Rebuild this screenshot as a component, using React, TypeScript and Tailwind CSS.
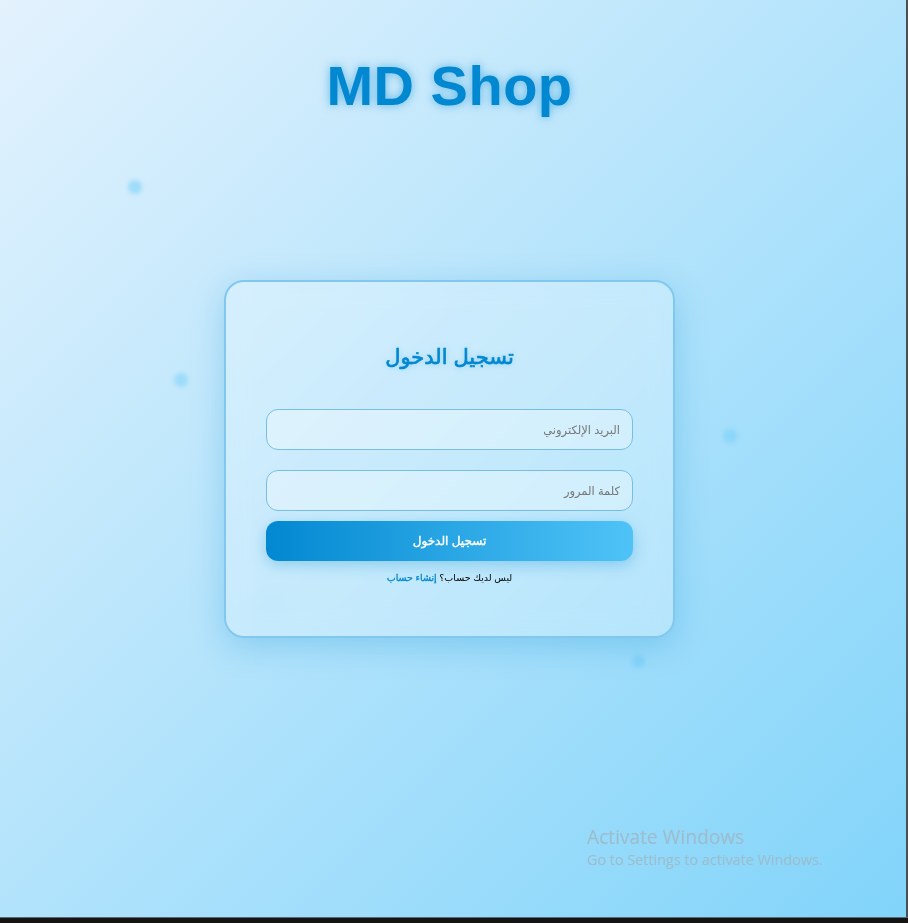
import React from "react";

const font = "[font-family:'Liberation_Sans','DejaVu_Sans',Arial,sans-serif]";

export default function App() {
  return (
    <div className="w-[908px] h-[923px] flex flex-col bg-[#111] overflow-hidden">
      <div className="flex h-[917px]">
        <div
          className={`relative flex-1 h-full flex flex-col items-center pr-[7px] bg-[linear-gradient(135deg,#e3f2fd,#81d4fa)] ${font}`}
        >
          {/* particles */}
          <div className="absolute left-[128px] top-[180px] w-[14px] h-[14px] rounded-full bg-[#4fc3f7]/40 blur-[2px]" />
          <div className="absolute left-[174px] top-[373px] w-[14px] h-[14px] rounded-full bg-[#4fc3f7]/35 blur-[2px]" />
          <div className="absolute left-[723px] top-[429px] w-[14px] h-[14px] rounded-full bg-[#4fc3f7]/30 blur-[2px]" />
          <div className="absolute left-[632px] top-[655px] w-[13px] h-[13px] rounded-full bg-[#4fc3f7]/30 blur-[2px]" />
          <div className="absolute left-[262px] top-[594px] w-[20px] h-[20px] rounded-full bg-[#81d4fa]/30 blur-[4px]" />

          <h1 className="mt-[54px] h-[64px] leading-[64px] text-[56px] font-bold text-[#0288d1] tracking-[0.5px] [text-shadow:0_0_10px_rgba(2,136,209,0.55)]">
            MD Shop
          </h1>

          <div
            dir="rtl"
            className="mt-[162px] w-[451px] rounded-[20px] border-2 border-[#81c7ee] bg-white/25 backdrop-blur-md shadow-[0_8px_32px_rgba(2,136,209,0.25)] px-[40px] pt-[41px] pb-[51px] flex flex-col"
          >
            <h2 className="mt-[20px] h-[28px] leading-[28px] text-center text-[21px] font-normal text-[#0288d1] [-webkit-text-stroke:0.7px_#0288d1] [text-shadow:0_0_6px_rgba(2,136,209,0.35)]">
              تسجيل الدخول
            </h2>
            <input
              type="email"
              placeholder="البريد الإلكتروني"
              className="mt-[38px] h-[41px] w-full rounded-[12px] border border-[#78bde3] bg-white/30 px-[12px] text-[11.5px] text-[#333] placeholder:text-[#777] outline-none"
            />
            <input
              type="password"
              placeholder="كلمة المرور"
              className="mt-[20px] h-[41px] w-full rounded-[12px] border border-[#78bde3] bg-white/30 px-[12px] text-[11.5px] text-[#333] placeholder:text-[#777] outline-none"
            />
            <button className="mt-[10px] h-[40px] w-full rounded-[12px] bg-[linear-gradient(to_left,#4fc3f7,#0288d1)] text-white text-[12px] font-normal [-webkit-text-stroke:0.4px_#fff] shadow-[0_4px_15px_rgba(2,136,209,0.3)]">
              تسجيل الدخول
            </button>
            <p className="mt-[10px] h-[14px] leading-[14px] text-center text-[9.5px] text-black">
              ليس لديك حساب؟{" "}
              <a className="text-[#0288d1] [-webkit-text-stroke:0.3px_#0288d1]">إنشاء حساب</a>
            </p>
          </div>

          {/* watermark */}
          <div className="absolute left-[587px] top-[824px] [font-family:'Open_Sans','Noto_Sans',sans-serif] text-[#9dbccc]">
            <div className="text-[19.2px] leading-[25px]">Activate Windows</div>
            <div className="text-[14.4px] leading-[20px] mt-[1px]">Go to Settings to activate Windows.</div>
          </div>
        </div>
        <div className="w-[2px] h-full bg-[#4a4f52]" />
      </div>
      <div className="h-[1px] bg-[#5c6a70]" />
      <div className="flex-1 bg-[#141414]" />
    </div>
  );
}
